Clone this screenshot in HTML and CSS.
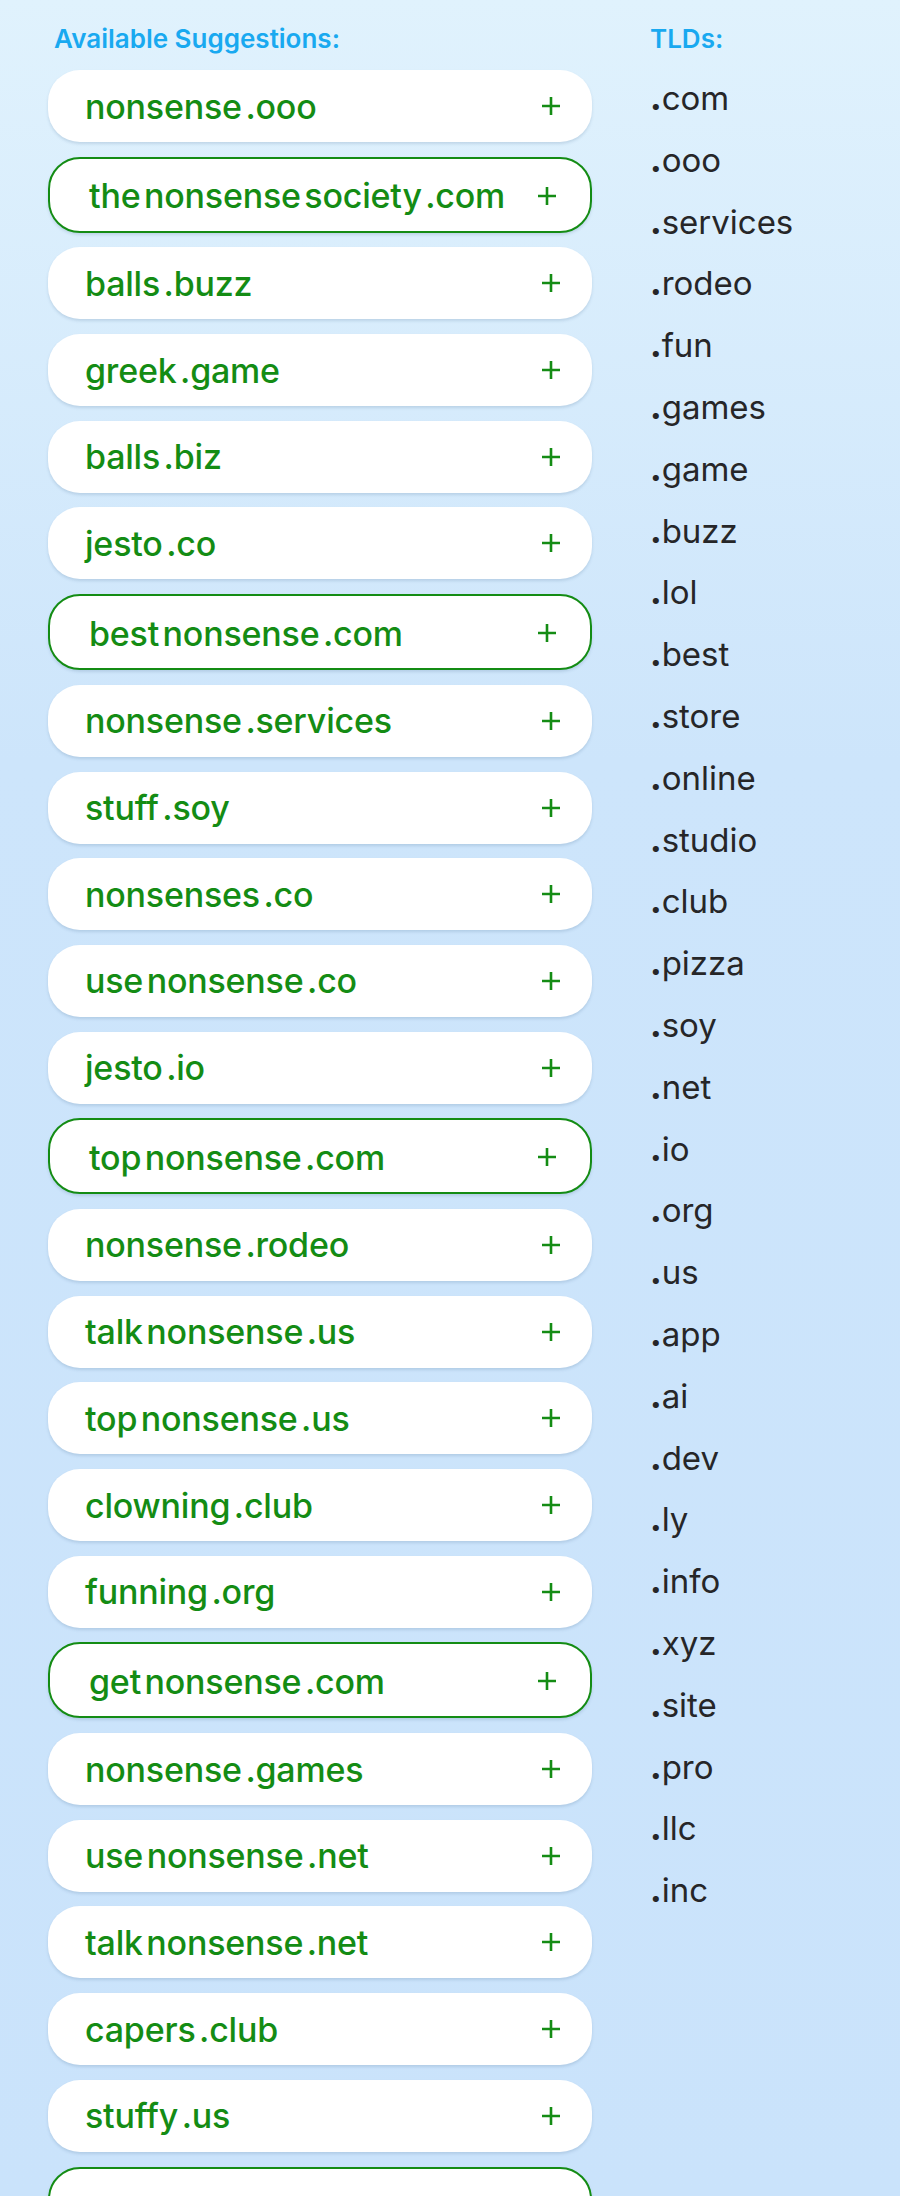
FILE: index.html
```html
<!DOCTYPE html>
<html lang="en">
<head>
<meta charset="utf-8">
<title>Domain suggestions</title>
<link rel="stylesheet" href="styles.css">
</head>
<body>
<div class="page">
  <section class="suggestions">
    <h2 class="heading">Available Suggestions:</h2>
    <ul class="cards">
      <li class="card"><span class="name"><span>nonsense</span><span>.ooo</span></span><svg class="plus" viewBox="0 0 18 18"><path d="M9 0v18M0 9h18"/></svg></li>
      <li class="card selected"><span class="name"><span>the</span><span>nonsense</span><span>society</span><span>.com</span></span><svg class="plus" viewBox="0 0 18 18"><path d="M9 0v18M0 9h18"/></svg></li>
      <li class="card"><span class="name"><span>balls</span><span>.buzz</span></span><svg class="plus" viewBox="0 0 18 18"><path d="M9 0v18M0 9h18"/></svg></li>
      <li class="card"><span class="name"><span>greek</span><span>.game</span></span><svg class="plus" viewBox="0 0 18 18"><path d="M9 0v18M0 9h18"/></svg></li>
      <li class="card"><span class="name"><span>balls</span><span>.biz</span></span><svg class="plus" viewBox="0 0 18 18"><path d="M9 0v18M0 9h18"/></svg></li>
      <li class="card"><span class="name"><span>jesto</span><span>.co</span></span><svg class="plus" viewBox="0 0 18 18"><path d="M9 0v18M0 9h18"/></svg></li>
      <li class="card selected"><span class="name"><span>best</span><span>nonsense</span><span>.com</span></span><svg class="plus" viewBox="0 0 18 18"><path d="M9 0v18M0 9h18"/></svg></li>
      <li class="card"><span class="name"><span>nonsense</span><span>.services</span></span><svg class="plus" viewBox="0 0 18 18"><path d="M9 0v18M0 9h18"/></svg></li>
      <li class="card"><span class="name"><span>stuff</span><span>.soy</span></span><svg class="plus" viewBox="0 0 18 18"><path d="M9 0v18M0 9h18"/></svg></li>
      <li class="card"><span class="name"><span>nonsenses</span><span>.co</span></span><svg class="plus" viewBox="0 0 18 18"><path d="M9 0v18M0 9h18"/></svg></li>
      <li class="card"><span class="name"><span>use</span><span>nonsense</span><span>.co</span></span><svg class="plus" viewBox="0 0 18 18"><path d="M9 0v18M0 9h18"/></svg></li>
      <li class="card"><span class="name"><span>jesto</span><span>.io</span></span><svg class="plus" viewBox="0 0 18 18"><path d="M9 0v18M0 9h18"/></svg></li>
      <li class="card selected"><span class="name"><span>top</span><span>nonsense</span><span>.com</span></span><svg class="plus" viewBox="0 0 18 18"><path d="M9 0v18M0 9h18"/></svg></li>
      <li class="card"><span class="name"><span>nonsense</span><span>.rodeo</span></span><svg class="plus" viewBox="0 0 18 18"><path d="M9 0v18M0 9h18"/></svg></li>
      <li class="card"><span class="name"><span>talk</span><span>nonsense</span><span>.us</span></span><svg class="plus" viewBox="0 0 18 18"><path d="M9 0v18M0 9h18"/></svg></li>
      <li class="card"><span class="name"><span>top</span><span>nonsense</span><span>.us</span></span><svg class="plus" viewBox="0 0 18 18"><path d="M9 0v18M0 9h18"/></svg></li>
      <li class="card"><span class="name"><span>clowning</span><span>.club</span></span><svg class="plus" viewBox="0 0 18 18"><path d="M9 0v18M0 9h18"/></svg></li>
      <li class="card"><span class="name"><span>funning</span><span>.org</span></span><svg class="plus" viewBox="0 0 18 18"><path d="M9 0v18M0 9h18"/></svg></li>
      <li class="card selected"><span class="name"><span>get</span><span>nonsense</span><span>.com</span></span><svg class="plus" viewBox="0 0 18 18"><path d="M9 0v18M0 9h18"/></svg></li>
      <li class="card"><span class="name"><span>nonsense</span><span>.games</span></span><svg class="plus" viewBox="0 0 18 18"><path d="M9 0v18M0 9h18"/></svg></li>
      <li class="card"><span class="name"><span>use</span><span>nonsense</span><span>.net</span></span><svg class="plus" viewBox="0 0 18 18"><path d="M9 0v18M0 9h18"/></svg></li>
      <li class="card"><span class="name"><span>talk</span><span>nonsense</span><span>.net</span></span><svg class="plus" viewBox="0 0 18 18"><path d="M9 0v18M0 9h18"/></svg></li>
      <li class="card"><span class="name"><span>capers</span><span>.club</span></span><svg class="plus" viewBox="0 0 18 18"><path d="M9 0v18M0 9h18"/></svg></li>
      <li class="card"><span class="name"><span>stuffy</span><span>.us</span></span><svg class="plus" viewBox="0 0 18 18"><path d="M9 0v18M0 9h18"/></svg></li>
      <li class="card selected"></li>
    </ul>
  </section>
  <section class="tlds">
    <h2 class="heading">TLDs:</h2>
    <ul class="tld-list">
      <li><b>.</b>com</li>
      <li><b>.</b>ooo</li>
      <li><b>.</b>services</li>
      <li><b>.</b>rodeo</li>
      <li><b>.</b>fun</li>
      <li><b>.</b>games</li>
      <li><b>.</b>game</li>
      <li><b>.</b>buzz</li>
      <li><b>.</b>lol</li>
      <li><b>.</b>best</li>
      <li><b>.</b>store</li>
      <li><b>.</b>online</li>
      <li><b>.</b>studio</li>
      <li><b>.</b>club</li>
      <li><b>.</b>pizza</li>
      <li><b>.</b>soy</li>
      <li><b>.</b>net</li>
      <li><b>.</b>io</li>
      <li><b>.</b>org</li>
      <li><b>.</b>us</li>
      <li><b>.</b>app</li>
      <li><b>.</b>ai</li>
      <li><b>.</b>dev</li>
      <li><b>.</b>ly</li>
      <li><b>.</b>info</li>
      <li><b>.</b>xyz</li>
      <li><b>.</b>site</li>
      <li><b>.</b>pro</li>
      <li><b>.</b>llc</li>
      <li><b>.</b>inc</li>
    </ul>
  </section>
</div>
</body>
</html>
```

FILE: styles.css
```css
* { box-sizing: border-box; }

html, body {
  margin: 0;
  padding: 0;
}

body {
  width: 900px;
  height: 2196px;
  overflow: hidden;
  font-family: Inter, "Noto Sans", sans-serif;
  background: linear-gradient(180deg, #e0f2fd 0px, #cde5fb 760px, #cae3fb 2196px);
}

.page {
  display: flex;
  gap: 58px;
  padding: 0 0 0 48px;
}

.suggestions {
  width: 544px;
  flex: none;
}

.heading {
  margin: 0;
  height: 70px;
  padding-top: 24px;
  font-size: 26px;
  line-height: 30px;
  font-weight: 600;
  color: #19a9f0;
}

.suggestions .heading {
  padding-left: 6px;
}

.cards {
  list-style: none;
  margin: 0;
  padding: 0;
  display: flex;
  flex-direction: column;
  gap: 14.7px;
}

.card {
  height: 72px;
  flex: none;
  border-radius: 32px;
  background: #fff;
  box-shadow: 0 2px 3px rgba(60, 100, 140, 0.18);
  display: flex;
  align-items: center;
  justify-content: space-between;
  padding: 0 32px 0 37px;
  color: #148c14;
}

.card.selected {
  height: 76px;
  border: 2px solid #148c14;
  padding: 2px 34px 0 39px;
}

.name {
  display: flex;
  gap: 3.5px;
  font-size: 34px;
  font-weight: 500;
  letter-spacing: -0.2px;
  white-space: nowrap;
}

.plus {
  width: 18px;
  height: 18px;
  flex: none;
  stroke: #148c14;
  stroke-width: 2.6;
  fill: none;
}

.tlds .heading {
  height: 78px;
}

.tld-list {
  list-style: none;
  margin: 0;
  padding: 0;
}

.tld-list li {
  height: 61.8px;
  font-size: 33px;
  line-height: 40px;
  color: #262628;
  font-weight: 400;
}

.tld-list b {
  font-weight: 800;
}
```
